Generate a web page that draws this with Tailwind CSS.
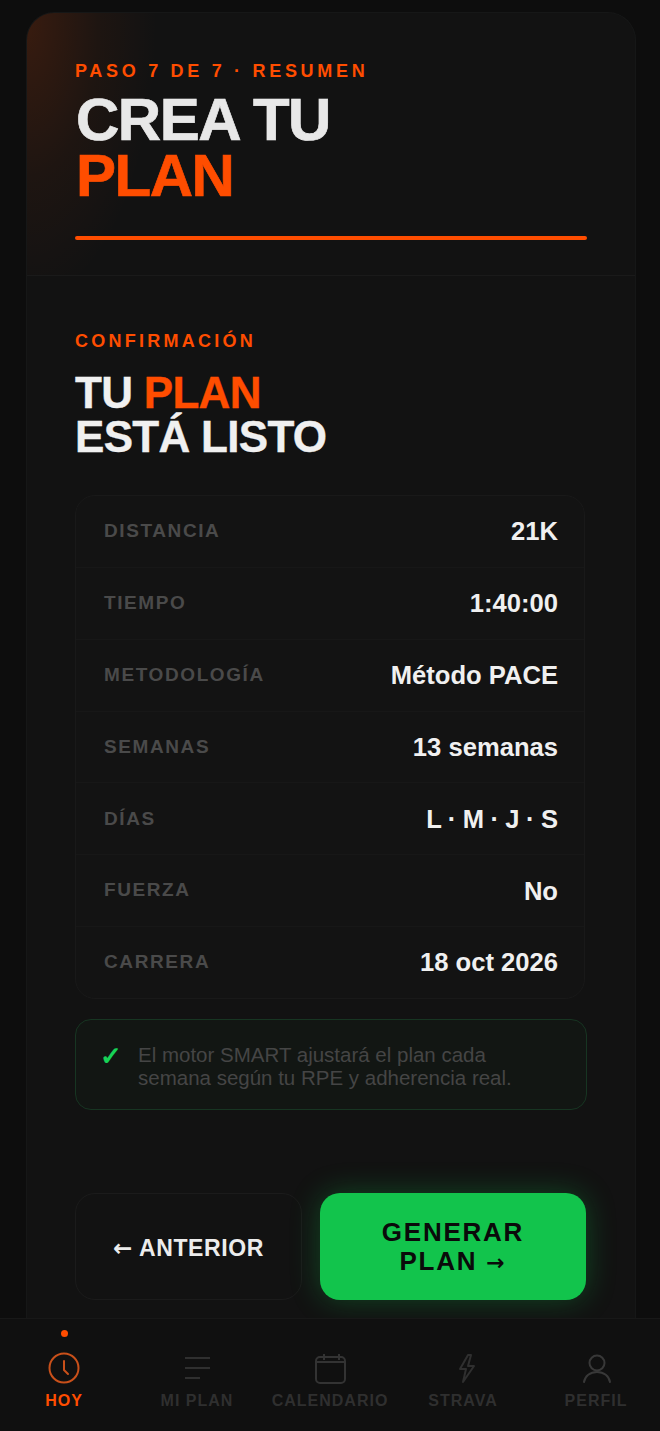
<!DOCTYPE html>
<html lang="es">
<head>
  <meta charset="UTF-8">
  <meta name="viewport" content="width=device-width, initial-scale=1.0">
  <title>Crea tu plan</title>
  <script src="https://cdn.jsdelivr.net/npm/@tailwindcss/browser@4"></script>
</head>
<body class="bg-[#0d0d0d] font-['Liberation_Sans',Arial,sans-serif]">
  <div class="h-[1431px] w-[660px] flex flex-col overflow-hidden">

    <!-- Main card -->
    <main class="flex-1 min-h-0 mt-3 ml-[26px] mr-[24px] rounded-t-[28px] bg-[#121212] border-x border-t border-[#161717] overflow-hidden">

      <!-- Header -->
      <header class="h-[263px] px-[48px] pt-[46px] border-b border-[#1a1a1a] bg-[radial-gradient(ellipse_130px_280px_at_0_10px,rgba(255,77,0,0.16),rgba(255,77,0,0.05)_55%,transparent_100%)]">
        <p class="text-[18px] leading-6 font-bold tracking-[3.7px] text-[#ff4d00]">PASO 7 DE 7 · RESUMEN</p>
        <h1 class="mt-[9px] ml-px text-[60px] leading-[56px] font-bold tracking-[-1.5px] text-[#e8e8e8] [-webkit-text-stroke:0.7px]">CREA TU<br><span class="text-[#ff4d00]">PLAN</span></h1>
        <div class="mt-[32px] h-1 rounded-full bg-[#ff4d00]"></div>
      </header>

      <!-- Summary -->
      <section class="px-[48px] pt-[53px]">
        <p class="text-[18px] leading-6 font-bold tracking-[3.25px] text-[#ff4d00]">CONFIRMACIÓN</p>
        <h2 class="mt-[18px] text-[44px] leading-[43.5px] font-bold tracking-[-0.7px] text-[#f0f0f0] [-webkit-text-stroke:0.4px]">TU <span class="text-[#ff4d00]">PLAN</span><br>ESTÁ LISTO</h2>

        <dl class="mt-[37px] w-[510px] h-[504px] flex flex-col rounded-[20px] border border-[#191919] bg-[#131313] divide-y divide-[#171717]">
          <div class="flex-1 flex items-center justify-between pl-7 pr-[26px]">
            <dt class="text-[19px] font-bold tracking-[1.6px] text-[#4a4a4a]">DISTANCIA</dt>
            <dd class="text-[25.6px] font-bold text-[#f0f0f0]">21K</dd>
          </div>
          <div class="flex-1 flex items-center justify-between pl-7 pr-[26px]">
            <dt class="text-[19px] font-bold tracking-[1.6px] text-[#4a4a4a]">TIEMPO</dt>
            <dd class="text-[25.6px] font-bold text-[#f0f0f0]">1:40:00</dd>
          </div>
          <div class="flex-1 flex items-center justify-between pl-7 pr-[26px]">
            <dt class="text-[19px] font-bold tracking-[1.6px] text-[#4a4a4a]">METODOLOGÍA</dt>
            <dd class="text-[25.6px] font-bold text-[#f0f0f0]">Método PACE</dd>
          </div>
          <div class="flex-1 flex items-center justify-between pl-7 pr-[26px]">
            <dt class="text-[19px] font-bold tracking-[1.6px] text-[#4a4a4a]">SEMANAS</dt>
            <dd class="text-[25.6px] font-bold text-[#f0f0f0]">13 semanas</dd>
          </div>
          <div class="flex-1 flex items-center justify-between pl-7 pr-[26px]">
            <dt class="text-[19px] font-bold tracking-[1.6px] text-[#4a4a4a]">DÍAS</dt>
            <dd class="text-[25.6px] font-bold text-[#f0f0f0] [word-spacing:-0.7px]">L · M · J · S</dd>
          </div>
          <div class="flex-1 flex items-center justify-between pl-7 pr-[26px]">
            <dt class="text-[19px] font-bold tracking-[1.6px] text-[#4a4a4a]">FUERZA</dt>
            <dd class="text-[25.6px] font-bold text-[#f0f0f0]">No</dd>
          </div>
          <div class="flex-1 flex items-center justify-between pl-7 pr-[26px]">
            <dt class="text-[19px] font-bold tracking-[1.6px] text-[#4a4a4a]">CARRERA</dt>
            <dd class="text-[25.6px] font-bold text-[#f0f0f0]">18 oct 2026</dd>
          </div>
        </dl>

        <!-- SMART note -->
        <div class="mt-[20px] h-[91px] flex items-start gap-4 pl-6 pr-[60px] pt-[23px] rounded-2xl border border-[#173522] bg-[#121613]">
          <span class="text-[26px] leading-[26px] font-bold text-[#17d257]">✓</span>
          <p class="text-[20.5px] leading-[23px] text-[#454545]">El motor SMART ajustará el plan cada semana según tu RPE y adherencia real.</p>
        </div>

        <!-- Actions -->
        <div class="mt-[83px] flex gap-[18px]">
          <button class="w-[227px] h-[107px] pt-[3px] rounded-[20px] border border-[#1b1b1b] text-[23px] font-bold tracking-[0.6px] text-[#ececec]"><span class="font-['DejaVu_Sans'] text-[23px] font-bold">←</span> ANTERIOR</button>
          <button class="w-[266px] h-[107px] pt-[2px] rounded-[20px] bg-[#12c44c] shadow-[0_0_30px_rgba(18,196,76,0.3)] text-[26px] leading-[29.5px] font-bold tracking-[1.75px] text-[#0a0a0a]">GENERAR<br>PLAN <span class="font-['DejaVu_Sans'] text-[22px] font-bold">→</span></button>
        </div>
      </section>
    </main>

    <!-- Bottom nav -->
    <nav class="relative h-[113px] shrink-0 flex justify-between bg-[#101010] border-t border-[#181818]">
      <a class="relative w-32 flex flex-col items-center pt-[33px] text-[#ff4d00]">
        <span class="absolute top-[11px] w-[7px] h-[7px] rounded-full bg-[#ff4d00]"></span>
        <svg class="w-8 h-8" viewBox="0 0 32 32" fill="none" stroke="#c9501a" stroke-width="2" stroke-linecap="round" stroke-linejoin="round"><circle cx="16" cy="16" r="14.500"/><path d="M16 9v9l4 4"/></svg>
        <span class="mt-[7px] text-[16px] leading-5 font-bold tracking-[1px]">HOY</span>
      </a>
      <a class="w-32 flex flex-col items-center pt-[33px] text-[#2f2f2f]">
        <svg class="w-8 h-8" viewBox="0 0 32 32" fill="none" stroke="#2f2f2f" stroke-width="2"><path d="M4 6h25M4 16h25M4 26h15"/></svg>
        <span class="mt-[7px] text-[16px] leading-5 font-bold tracking-[1px]">MI PLAN</span>
      </a>
      <a class="w-32 flex flex-col items-center pt-[33px] text-[#2f2f2f]">
        <svg class="w-8 h-8" viewBox="0 0 32 32" fill="none" stroke="#333" stroke-width="2"><rect x="2" y="5" width="29" height="26" rx="4"/><path d="M2 10h29M10 2v6M25 2v6"/></svg>
        <span class="mt-[7px] text-[16px] leading-5 font-bold tracking-[1px]">CALENDARIO</span>
      </a>
      <a class="w-32 flex flex-col items-center pt-[33px] text-[#2f2f2f]">
        <svg class="w-8 h-8" viewBox="0 0 32 32" fill="none" stroke="#2f2f2f" stroke-width="2" stroke-linejoin="round"><path d="M21 3 13 17h6l-3 13 11-16h-6l3-11z"/></svg>
        <span class="mt-[7px] text-[16px] leading-5 font-bold tracking-[1px]">STRAVA</span>
      </a>
      <a class="w-32 flex flex-col items-center pt-[33px] text-[#2f2f2f]">
        <svg class="w-8 h-8" viewBox="0 0 32 32" fill="none" stroke="#383838" stroke-width="2" stroke-linecap="round"><circle cx="17" cy="11" r="7.500"/><path d="M4 30c1-6 6-10 13-10s12 4 13 10"/></svg>
        <span class="mt-[7px] text-[16px] leading-5 font-bold tracking-[1px]">PERFIL</span>
      </a>
    </nav>
  </div>
</body>
</html>
